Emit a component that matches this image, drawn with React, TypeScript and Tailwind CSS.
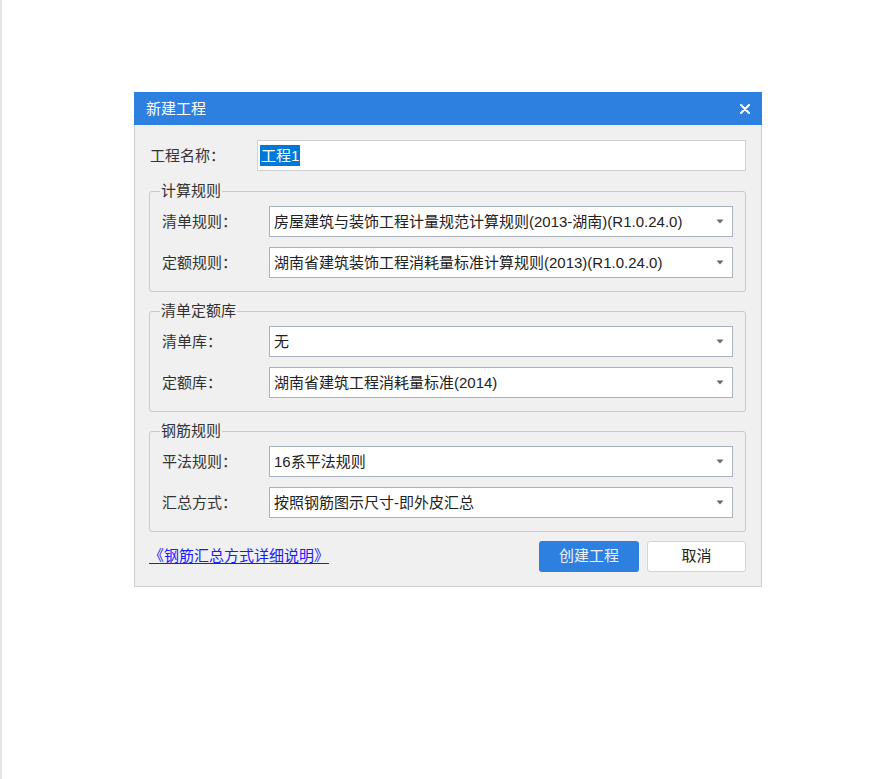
import React from "react";

const FONT = '"Liberation Sans", "Noto Sans CJK SC", sans-serif';

type FieldProps = {
	label: string;
	value: string;
};

const SelectRow = ({ label, value }: FieldProps) => (
	<div className="flex items-center">
		<div className="w-[107px] shrink-0 pt-px text-[15px] text-[#333]">{label}</div>
		<div className="flex h-[31px] flex-1 items-center justify-between border border-[#aab2c2] bg-white pl-[4px] pr-[8px]">
			<span className="truncate pt-px text-[15px] leading-[20px] text-[#222]">{value}</span>
			{/* small dropdown arrow */}
			<svg width="8" height="5" viewBox="0 0 8 5" className="shrink-0">
				<path d="M0.5 0.5 L7.5 0.5 L4 4.5 Z" fill="#6b6b6b" />
			</svg>
		</div>
	</div>
);

type GroupProps = {
	title: string;
	rows: FieldProps[];
};

const Group = ({ title, rows }: GroupProps) => (
	<fieldset className="rounded-[3px] border border-[#c9c9c9] px-[12px] pb-[13px] pt-[6px]">
		<legend className="ml-[-2px] px-px text-[15px] leading-[18px] text-[#333]">{title}</legend>
		<div className="flex flex-col gap-[10px]">
			{rows.map((r) => (
				<SelectRow key={r.label} label={r.label} value={r.value} />
			))}
		</div>
	</fieldset>
);

const groups: GroupProps[] = [
	{
		title: "计算规则",
		rows: [
			{ label: "清单规则：", value: "房屋建筑与装饰工程计量规范计算规则(2013-湖南)(R1.0.24.0)" },
			{ label: "定额规则：", value: "湖南省建筑装饰工程消耗量标准计算规则(2013)(R1.0.24.0)" },
		],
	},
	{
		title: "清单定额库",
		rows: [
			{ label: "清单库：", value: "无" },
			{ label: "定额库：", value: "湖南省建筑工程消耗量标准(2014)" },
		],
	},
	{
		title: "钢筋规则",
		rows: [
			{ label: "平法规则：", value: "16系平法规则" },
			{ label: "汇总方式：", value: "按照钢筋图示尺寸-即外皮汇总" },
		],
	},
];

export default function App() {
	return (
		<div className="min-h-[779px] border-l-2 border-[#e6e6e6] bg-white pl-[132px] pt-[92px]" style={{ fontFamily: FONT }}>
			<div className="w-[628px] bg-[#f0f0f0]">
				{/* 标题栏 */}
				<div className="flex h-[33px] items-center justify-between bg-[#2d7fe0] pl-[12px] pr-[12px]">
					<span className="pt-px text-[15px] text-white">新建工程</span>
					<svg width="10" height="10" viewBox="0 0 10 10">
						<path d="M1 1 L9 9 M9 1 L1 9" stroke="white" strokeWidth="2" strokeLinecap="round" />
					</svg>
				</div>

				<div className="border border-t-0 border-[#cfcfcf] pb-[14px] pl-[14px] pr-[15px] pt-[15px]">
					{/* 工程名称 */}
					<div className="flex items-center pl-px">
						<div className="w-[107px] shrink-0 pt-px text-[15px] text-[#333]">工程名称：</div>
						<div className="flex h-[31px] flex-1 items-center border border-[#cfcfcf] bg-white pl-[2px]">
							<span className="bg-[#0078d7] px-px text-[15px] leading-[21px] text-white">工程1</span>
						</div>
					</div>

					<div className="mt-[11px] flex flex-col gap-[10px]">
						{groups.map((g) => (
							<Group key={g.title} title={g.title} rows={g.rows} />
						))}
					</div>

					{/* 底部 */}
					<div className="mt-[9px] flex items-center justify-between">
						<a className="text-[15px] text-[#1a1aff] underline underline-offset-2" href="#">
							《钢筋汇总方式详细说明》
						</a>
						<div className="flex gap-[8px]">
							<button className="h-[31px] w-[100px] rounded-[3px] bg-[#2d80e0] text-[15px] text-[#eef4ff]">创建工程</button>
							<button className="h-[31px] w-[99px] rounded-[3px] border border-[#d4d4d4] bg-white text-[15px] text-[#222]">取消</button>
						</div>
					</div>
				</div>
			</div>
		</div>
	);
}
